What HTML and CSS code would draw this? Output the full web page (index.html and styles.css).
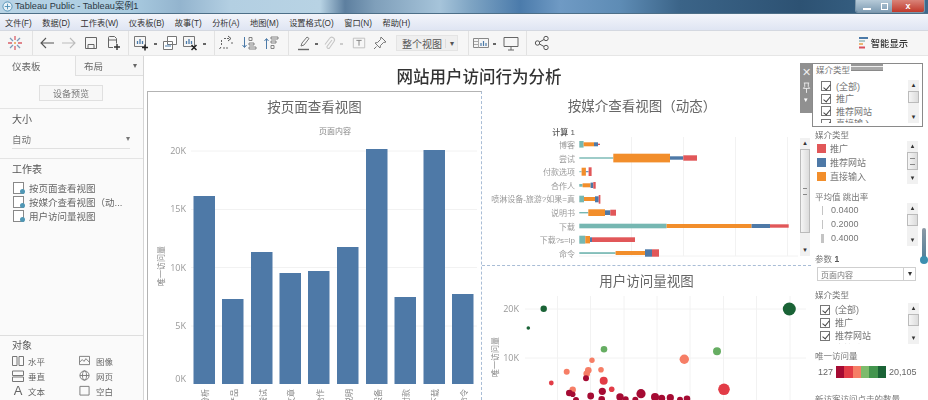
FILE: index.html
```html
<!DOCTYPE html>
<html lang="zh-CN">
<head>
<meta charset="utf-8">
<title>Tableau Public - Tableau案例1</title>
<link rel="stylesheet" href="styles.css">
</head>
<body>
<div class="app">
  <header class="titlebar">
    <svg class="title-logo" viewBox="0 0 12 12"><circle cx="6" cy="6" r="5" fill="#e8f2f8" stroke="#4f8fb5"/><path d="M6 3v6M3 6h6" stroke="#4f8fb5"/></svg>
    <span class="title-text">Tableau Public - Tableau案例1</span>
    <div class="winbtns"><span class="wb wb-min"><i></i></span><span class="wb wb-max"><i></i></span><span class="wb wb-close">x</span></div>
  </header>
  <nav class="menubar">
    <span>文件(F)</span><span>数据(D)</span><span>工作表(W)</span><span>仪表板(B)</span><span>故事(T)</span><span>分析(A)</span><span>地图(M)</span><span>设置格式(O)</span><span>窗口(N)</span><span>帮助(H)</span>
  </nav>
  <div class="toolbar">
    <div class="tg tg1">
      <svg class="ic" viewBox="0 0 16 16"><g stroke="#d9606a" stroke-width="1.3"><path d="M8 1v4M8 11v4M1 8h4M11 8h4"/></g><g stroke="#7d9bb8" stroke-width="1.3"><path d="M3 3l3 3M10 10l3 3M13 3l-3 3M6 10l-3 3"/></g><circle cx="8" cy="8" r="1" fill="#e8a04a"/></svg>
    </div>
    <div class="tg tg2">
      <svg class="ic" viewBox="0 0 16 16"><path d="M15 8H2M7 3L2 8l5 5" fill="none" stroke="#555" stroke-width="1.1"/></svg>
      <svg class="ic" viewBox="0 0 16 16"><path d="M1 8h13M9 3l5 5-5 5" fill="none" stroke="#bbb" stroke-width="1.1"/></svg>
      <svg class="ic" viewBox="0 0 16 16"><path d="M2.500 2.500h11v11h-11zM5 13.500v-4h6v4" fill="none" stroke="#666"/></svg>
      <svg class="ic" viewBox="0 0 16 16"><path d="M8 12.500H3.500v-10a1 1 0 0 1 1-1h5l2 2v5M3.500 5h8" fill="none" stroke="#666"/><path d="M12 9v6M9 12h6" stroke="#333" stroke-width="1.400"/></svg>
    </div>
    <div class="tg tg3">
      <svg class="ic" viewBox="0 0 16 16"><path d="M1.500 1.500h11v10h-11z" fill="none" stroke="#777"/><path d="M4.500 9V6M7 9V4M9.500 9V6" stroke="#4b7aa8" stroke-width="1.300"/><path d="M12 9.500v6M9 12.500h6" stroke="#222" stroke-width="1.500"/></svg>
      <i class="dot"></i>
      <svg class="ic" viewBox="0 0 16 16"><path d="M5.500 1.500h9v8h-9zM1.500 6.500h9v8h-9z" fill="#fff" stroke="#777"/><path d="M4 12V10M6 12V9M8 12v-2" stroke="#4b7aa8"/></svg>
      <svg class="ic" viewBox="0 0 16 16"><path d="M1.500 1.500h11v10h-11z" fill="none" stroke="#777"/><path d="M4.500 9V6M7 9V4M9.500 9V6" stroke="#4b7aa8" stroke-width="1.300"/><path d="M9.500 10l5 5M14.500 10l-5 5" stroke="#222" stroke-width="1.500"/></svg>
      <i class="dot"></i>
    </div>
    <div class="tg tg4">
      <svg class="ic" viewBox="0 0 16 16"><path d="M5 3.500h6M13 7v3M4 13h6M2.500 5v5" fill="none" stroke="#666" stroke-dasharray="2 1"/><path d="M9 1l3 2.500L9 6M2 12l-1.500 2" fill="none" stroke="#555"/></svg>
      <svg class="ic" viewBox="0 0 16 16"><path d="M3.500 2v10M1.500 10l2 2.500 2-2.500" fill="none" stroke="#4b7aa8"/><path d="M8 2.500h3v3H8zM8 8h5v2H8zM8 12h7v2H8z" fill="none" stroke="#777" stroke-width=".9"/></svg>
      <svg class="ic" viewBox="0 0 16 16"><path d="M3.500 14V4M1.500 6l2-2.500 2 2.500" fill="none" stroke="#4b7aa8"/><path d="M8 2h7v2H8zM8 6h5v2H8zM8 10.500h3v3H8z" fill="none" stroke="#777" stroke-width=".9"/></svg>
    </div>
    <div class="tg tg5">
      <svg class="ic" viewBox="0 0 16 16"><path d="M5 11l1-3 5-6 2 1.500-5 6.500z" fill="none" stroke="#777"/><path d="M2 14.500h11" stroke="#666" stroke-width="1.400"/></svg>
      <i class="dot"></i>
      <svg class="ic" viewBox="0 0 16 16"><path d="M11 5l-5 6.500a1.500 1.500 0 0 0 2.500 1.500L13 6.500a2.700 2.700 0 0 0-4.500-3L4 9.500" fill="none" stroke="#c6c6c6" stroke-width="1.100"/></svg>
      <i class="dot dot-pale"></i>
      <svg class="ic ic-t" viewBox="0 0 16 16"><path d="M1.500 2.500h13v11h-13z" fill="none" stroke="#bbb"/><path d="M5 5h6M8 5v6" stroke="#777"/></svg>
      <svg class="ic ic-pin" viewBox="0 0 16 16"><path d="M9 2l5 5-2.500.5-3 3-.5 2.500-5-5 2.500-.5 3-3zM4.500 11.500L2 14" fill="none" stroke="#777"/></svg>
      <div class="combo"><span>整个视图</span><b>▾</b></div>
    </div>
    <div class="tg tg6">
      <svg class="ic" viewBox="0 0 16 16"><path d="M.5 3.500h15v9H.5z" fill="none" stroke="#888"/><path d="M5.500 3.500v9M1 6.500h4M1 9.500h4" stroke="#aaa"/><path d="M8 11V8M10.500 11V6M13 11V8" stroke="#4b7aa8" stroke-width="1.200"/></svg>
      <i class="dot"></i>
      <svg class="ic ic-pres" viewBox="0 0 16 16"><path d="M1 2.500h14v9H1z" fill="none" stroke="#666"/><path d="M8 11.500V15M5 15h6" stroke="#666"/></svg>
    </div>
    <div class="tg tg7">
      <svg class="ic" viewBox="0 0 16 16"><g fill="none" stroke="#555"><circle cx="3.500" cy="8" r="2.200"/><circle cx="12" cy="3.500" r="2.200"/><circle cx="12" cy="12.500" r="2.200"/><path d="M5.500 7l4.500-2.500M5.500 9l4.500 2.500"/></g></svg>
    </div>
    <div class="showme">
      <svg class="showme-ic" viewBox="0 0 10 12"><path d="M0 1h9" stroke="#4b7aa8" stroke-width="2"/><path d="M0 4h6" stroke="#9bb" stroke-width="1.500"/><path d="M0 7h4" stroke="#e8a04a" stroke-width="1.500"/><path d="M0 10.500h6" stroke="#d9505c" stroke-width="2"/></svg>
      <span>智能显示</span>
    </div>
  </div>
  <main class="workspace">
    <aside class="sidebar">
      <div class="tabs"><div class="tab tab-on">仪表板</div><div class="tab tab-off"><span>布局</span><b>▾</b></div></div>
      <section class="sec sec-dev"><button class="devbtn">设备预览</button></section>
      <section class="sec sec-size">
        <h4>大小</h4>
        <div class="sel"><span>自动</span><b>▾</b></div>
      </section>
      <section class="sec sec-sheets">
        <h4>工作表</h4>
        <ul class="sheets">
          <li><i class="sheet-ic"></i>按页面查看视图</li>
          <li><i class="sheet-ic"></i>按媒介查看视图（动...</li>
          <li><i class="sheet-ic"></i>用户访问量视图</li>
        </ul>
      </section>
      <section class="sec-obj">
        <h4>对象</h4>
        <div class="objs">
          <div><svg viewBox="0 0 12 12"><path d="M.5 1.500h4.500v9H.5zM7 1.500h4.500v9H7z" fill="none" stroke="#777"/></svg>水平</div>
          <div class="obj2"><svg viewBox="0 0 12 12"><path d="M.5 1.500h11v9H.5zM.5 8l3-3 2 2 2-3 4 4" fill="none" stroke="#777"/></svg>图像</div>
          <div><svg viewBox="0 0 12 12"><path d="M.5 1h11v4.500H.5zM.5 7h11v4.500H.5z" fill="none" stroke="#777"/></svg>垂直</div>
          <div class="obj2"><svg viewBox="0 0 12 12"><g fill="none" stroke="#777"><circle cx="6" cy="6" r="5"/><ellipse cx="6" cy="6" rx="2.200" ry="5"/><path d="M1 6h10"/></g></svg>网页</div>
          <div><span class="obj-a">A</span>文本</div>
          <div class="obj2"><svg viewBox="0 0 12 12"><path d="M1 1.500h10v9.500H1z" fill="none" stroke="#777"/></svg>空白</div>
        </div>
      </section>
    </aside>
    <div class="dash">
      <div class="dash-main">
        <h1 class="dash-title">网站用户访问行为分析</h1>
        <div class="dash-grid">
          <section class="panel panel-left">
            <h2 class="chart-title">按页面查看视图</h2>
            <svg class="chart" viewBox="149 119 331 281" width="331" height="281">
              <text class="cap" x="336" y="133" text-anchor="middle">页面内容</text>
              <g class="grid"><path d="M192 150H478M192 208.500H478M192 266.500H478M192 325H478"/></g>
              <g class="tick" text-anchor="end"><text x="187" y="153">20K</text><text x="187" y="211">15K</text><text x="187" y="270">10K</text><text x="187" y="328">5K</text><text x="187" y="381">0K</text></g>
              <text class="cap" transform="translate(165 265) rotate(-90)" text-anchor="middle">唯一访问量</text>
              <g class="bar">
                <rect x="194.500" y="195" width="21.500" height="188"/><rect x="223" y="298" width="21.500" height="85"/><rect x="252" y="251" width="21.500" height="132"/><rect x="280.500" y="272" width="21.500" height="111"/><rect x="309" y="270" width="21.500" height="113"/><rect x="338" y="246" width="21.500" height="137"/><rect x="367" y="148" width="21.500" height="235"/><rect x="395.500" y="296" width="21.500" height="87"/><rect x="424.500" y="149" width="21.500" height="234"/><rect x="453" y="293" width="21.500" height="90"/>
              </g>
              <g class="cap" text-anchor="end">
                <text transform="translate(209 388) rotate(-90)">分析</text><text transform="translate(238 388) rotate(-90)">产品</text><text transform="translate(267 388) rotate(-90)">尝试</text><text transform="translate(295 388) rotate(-90)">文章</text><text transform="translate(324 388) rotate(-90)">合作</text><text transform="translate(353 388) rotate(-90)">说明</text><text transform="translate(382 388) rotate(-90)">设备</text><text transform="translate(410 388) rotate(-90)">付款</text><text transform="translate(439 388) rotate(-90)">下载</text><text transform="translate(468 388) rotate(-90)">命令</text>
              </g>
            </svg>
          </section>
          <div class="col-mid">
            <section class="panel panel-media">
              <h2 class="chart-title">按媒介查看视图（动态）</h2>
              <svg class="chart" viewBox="482 118 329 146" width="329" height="146">
                <g class="grid"><path d="M631.500 136V255M683.500 136V255M735.500 136V255M787.500 136V255M579 255H798"/></g>
                <g class="lab" text-anchor="end">
                  <text class="lab-head" x="575" y="134">计算 1</text>
                  <text x="575" y="146.500">博客</text><text x="575" y="160.500">尝试</text><text x="575" y="173.500">付款选项</text><text x="575" y="187.500">合作人</text><text x="575" y="200.500">喷淋设备-旅游?如果=真</text><text x="575" y="214.500">说明书</text><text x="575" y="228.500">下载</text><text x="575" y="241.500">下载?s=lp</text><text x="575" y="255.500">命令</text>
                </g>
                <g class="teal"><rect x="579.300" y="140" width="4.300" height="6.600"/><rect x="579.300" y="156.300" width="34" height="1.400"/><rect x="579.300" y="170.200" width="2.300" height="1"/><rect x="579.300" y="183" width="3.300" height="2.700"/><rect x="579.300" y="194.700" width="4.700" height="6.600"/><rect x="579.300" y="211" width="9" height="1.400"/><rect x="579.300" y="222.700" width="87.300" height="4.600"/><rect x="579.300" y="234.700" width="6" height="8"/><rect x="579.300" y="251.200" width="36.300" height="1.700"/></g>
                <g class="orange"><rect x="583.600" y="141.300" width="10.400" height="4"/><rect x="613.300" y="152.700" width="56.700" height="8.700"/><rect x="581.600" y="166.700" width="4.300" height="8"/><rect x="582.600" y="182.300" width="8" height="4"/><rect x="584" y="196" width="11" height="4"/><rect x="588.300" y="208.300" width="16.700" height="6.700"/><rect x="666.600" y="223" width="85" height="4"/><rect x="585.300" y="235" width="4.700" height="7.400"/><rect x="615.600" y="250" width="29.400" height="4"/></g>
                <g class="blue"><rect x="594" y="141.300" width="4" height="4"/><rect x="670" y="155.300" width="13.300" height="3.400"/><rect x="585.900" y="170.200" width="2.700" height="1"/><rect x="590.600" y="181.600" width="2.700" height="5.400"/><rect x="595" y="195.300" width="3.700" height="6"/><rect x="605" y="209.300" width="5.300" height="4.700"/><rect x="751.600" y="223" width="18.400" height="4"/><rect x="590" y="236.300" width="2" height="4.700"/><rect x="645" y="248.300" width="7" height="7.400"/></g>
                <g class="red"><rect x="598" y="142.700" width="2" height="1.300"/><rect x="683.300" y="154.300" width="13.700" height="5.400"/><rect x="588.600" y="166.300" width="3" height="8.700"/><rect x="593.300" y="181" width="2.400" height="6.700"/><rect x="598.700" y="194" width="1.700" height="8.700"/><rect x="610.300" y="208.700" width="5.700" height="6"/><rect x="770" y="223.300" width="18.700" height="3.400"/><rect x="592" y="236.300" width="43" height="4.700"/><rect x="652" y="248.300" width="7" height="7.400"/></g>
              </svg>
              <div class="vs vs-media"><b>▴</b><i class="thumb thumb-grip"></i><b>▾</b></div>
            </section>
            <section class="panel panel-scatter">
              <h2 class="chart-title">用户访问量视图</h2>
              <svg class="chart" viewBox="482 296 329 104" width="329" height="104">
                <g class="grid"><path d="M525 309H806M525 358H806M557.500 296V400M590.500 296V400M624 296V400M657 296V400M690 296V400M723.500 296V400M756.500 296V400M790 296V400"/></g>
                <g class="tick" text-anchor="end"><text x="519" y="312">20K</text><text x="519" y="361">10K</text></g>
                <text class="cap" transform="translate(498 357) rotate(-90)" text-anchor="middle">唯一访问量</text>
                <g class="c-dg"><circle cx="543.700" cy="308.700" r="3.200"/><circle cx="528.300" cy="328" r="1.800"/><circle cx="789.300" cy="309" r="6.500"/></g>
                <g class="c-lg"><circle cx="604" cy="349.300" r="3.300"/><circle cx="717" cy="351.300" r="4"/></g>
                <g class="c-or"><circle cx="684.300" cy="359.300" r="4.700"/><circle cx="592" cy="360.300" r="2.700"/><circle cx="566.700" cy="371.700" r="3"/><circle cx="588.300" cy="370.300" r="3.300"/><circle cx="586.700" cy="373.700" r="3.300"/><circle cx="601" cy="369.700" r="2.800"/><circle cx="572.700" cy="389.700" r="3.200"/></g>
                <g class="c-rd"><circle cx="551.300" cy="383" r="2.400"/><circle cx="603.700" cy="380.700" r="4"/><circle cx="611.700" cy="389.300" r="2.800"/><circle cx="724" cy="389.300" r="5.800"/></g>
                <g class="c-dr"><circle cx="586" cy="378.300" r="3"/><circle cx="569.300" cy="393" r="3.300"/><circle cx="572.700" cy="394.300" r="2.800"/><circle cx="602.300" cy="391.300" r="3.600"/><circle cx="590.700" cy="396" r="3.400"/><circle cx="641" cy="393.700" r="4.600"/><circle cx="655" cy="397" r="4"/><circle cx="620" cy="397" r="3.700"/><circle cx="661.700" cy="398.300" r="3.500"/><circle cx="670.300" cy="397.700" r="3.600"/><circle cx="687" cy="398.700" r="3.300"/><circle cx="680" cy="399.700" r="3"/><circle cx="601.700" cy="399.300" r="3.300"/><circle cx="625.700" cy="399.300" r="3"/><circle cx="635.300" cy="399.700" r="3"/><circle cx="576" cy="400" r="3"/></g>
              </svg>
            </section>
          </div>
        </div>
      </div>
      <aside class="filters">
        <div class="f-sel">
          <div class="handle"><span>✕</span><svg viewBox="0 0 10 12"><path d="M2 1h6M3 1v4L1.500 7h7L7 5V1M5 7v5" fill="none" stroke="#eee"/></svg><b>▾</b></div>
          <div class="grip"></div>
          <h5>媒介类型</h5>
          <div class="f-body f-body-sel">
            <ul class="checks"><li><i class="chk"></i>(全部)</li><li><i class="chk"></i>推广</li><li><i class="chk"></i>推荐网站</li><li><i class="chk"></i>直接输入</li></ul>
            <div class="vs"><b>▴</b><i class="thumb"></i><b>▾</b></div>
          </div>
        </div>
        <div class="f f-legend">
          <h5>媒介类型</h5>
          <div class="f-body">
            <ul class="swatches"><li><i class="sw sw-r"></i>推广</li><li><i class="sw sw-b"></i>推荐网站</li><li><i class="sw sw-o"></i>直接输入</li><li><i class="sw sw-t"></i>直接访问</li></ul>
            <div class="vs"><b>▴</b><i class="thumb thumb-grip"></i><b>▾</b></div>
          </div>
        </div>
        <div class="f f-rate">
          <h5>平均值 跳出率</h5>
          <div class="f-body">
            <ul class="sizes"><li><i class="sz sz1"></i>0.0400</li><li><i class="sz sz2"></i>0.2000</li><li><i class="sz sz3"></i>0.4000</li></ul>
            <div class="vs"><b>▴</b><i class="thumb"></i><b>▾</b></div>
          </div>
        </div>
        <div class="f f-param">
          <h5>参数 <em>1</em></h5>
          <div class="param-sel"><span>页面内容</span><b>▾</b></div>
        </div>
        <div class="f f-media2">
          <h5>媒介类型</h5>
          <div class="f-body f-body-sel">
            <ul class="checks"><li><i class="chk"></i>(全部)</li><li><i class="chk"></i>推广</li><li><i class="chk"></i>推荐网站</li><li><i class="chk"></i>直接输入</li></ul>
            <div class="vs"><b>▴</b><i class="thumb"></i><b>▾</b></div>
          </div>
        </div>
        <div class="f f-color">
          <h5>唯一访问量</h5>
          <div class="ramp"><span>127</span><div class="ramp-bar"><i></i><i></i><i></i><i></i><i></i><i></i></div><span>20,105</span></div>
          <h5 class="f-last">新访客访问点击的数量</h5>
        </div>
      </aside>
      <div class="slider"></div>
    </div>
  </main>
</div>
</body>
</html>
```

FILE: styles.css
```css
* { box-sizing: border-box; }
html, body { margin: 0; height: 100%; overflow: hidden; background: #fff; }
body { font-family: "Liberation Sans", "Noto Sans CJK SC", sans-serif; color: #555; }
h1, h2, h4, h5, ul { margin: 0; padding: 0; font-weight: normal; list-style: none; }
i, em { font-style: normal; }

.app { width: 928px; height: 400px; display: flex; flex-direction: column; overflow: hidden; filter: blur(.3px); }

/* title bar */
.titlebar { height: 14px; flex: none; display: flex; align-items: center; position: relative; padding-left: 2px;
  background: linear-gradient(90deg, #b9d4e6 0, #a9cbe0 130px, #93b4ce 180px, #b3cfe2 230px, #b8d3e4 320px, #5d7f9f 345px, #7f9fba 375px, #a6c4da 440px, #7fa5c4 470px, #4b7bab 520px, #6f9ac4 560px, #5e8cb5 620px, #3b6488 680px, #2d5273 800px, #3d6a8e 928px);
  border-bottom: 1px solid #4d6f88; }
.title-logo { width: 11px; height: 11px; }
.title-text { margin-left: 2px; font-size: 9.200px; color: #2b3744; line-height: 13px; white-space: nowrap; }
.winbtns { position: absolute; right: 3px; top: 0; display: flex; height: 13px; border: 1px solid #7c96aa; border-top: 0; border-radius: 0 0 3px 3px; overflow: hidden; }
.wb { display: flex; align-items: center; justify-content: center; height: 12px; background: linear-gradient(#b6cad8, #7e9cb3); color: #fff; }
.wb-min { width: 21px; } .wb-min i { width: 8px; height: 2px; margin-top: 5px; background: #fff; }
.wb-max { width: 15px; } .wb-max i { width: 7px; height: 7px; border: 1px solid #fff; }
.wb-close { width: 32px; background: linear-gradient(#d98378, #c0392b); font: bold 9px "Liberation Sans", sans-serif; line-height: 10px; }

/* menu */
.menubar { height: 17px; flex: none; display: flex; align-items: center; gap: 10.500px; padding-left: 5px; font-size: 8.200px; color: #333; white-space: nowrap;
  background: linear-gradient(#f3f5fb, #dfe5f3); border-bottom: 1px solid #d4d8e0; }

/* toolbar */
.toolbar { height: 25px; flex: none; display: flex; align-items: center; background: #f6f6f6; border-bottom: 1px solid #e6e6e6; }
.tg { height: 24px; display: flex; align-items: center; flex: none; border-right: 1px solid #e2e2e2; }
.tg1 { padding: 0 9px 0 7px; width: 33px; }
.tg2 { gap: 6px; padding: 0 7px 0 6px; width: 96px; }
.tg3 { gap: 4px; padding-left: 4px; width: 86px; }
.tg4 { gap: 6px; padding-left: 4px; width: 74px; }
.tg5 { gap: 2px; padding-left: 7px; width: 180px; }
.tg6 { gap: 3px; padding-left: 4px; width: 58px; }
.tg7 { padding-left: 7px; border-right: 0; width: 30px; }
.ic { width: 16px; height: 16px; flex: none; }
.ic-t { margin-left: 6px; width: 14px; }
.ic-pin { margin-left: 4px; }
.ic-pres { margin-left: 3px; }
.dot { width: 5px; height: 5px; flex: none; position: relative; }
.dot::after { content: ""; display: block; width: 3px; height: 2px; margin: 2px auto 0; background: #666; }
.dot-pale::after { background: #ccc; }
.combo { margin-left: 6px; width: 62px; height: 16px; display: flex; align-items: center; justify-content: space-between; background: #efefef; border: 1px solid #e4e4e4; padding: 0 3px 0 5px; font-size: 10px; color: #555; }
.combo b { font-size: 8px; font-weight: normal; border-left: 1px solid #ddd; padding-left: 4px; }
.showme { margin-left: auto; display: flex; align-items: center; gap: 2px; padding-right: 20px; font-size: 9.300px; color: #333; font-weight: 500; }
.showme-ic { width: 10px; height: 12px; }

/* workspace */
.workspace { flex: 1; display: flex; min-height: 0; }
.sidebar { width: 144px; flex: none; background: #fafafa; border-right: 1px solid #d6d6d6; display: flex; flex-direction: column; font-size: 9.500px; color: #666; }
.tabs { height: 20px; display: flex; flex: none; }
.tab { display: flex; align-items: center; }
.tab-on { width: 76px; padding-left: 12px; background: #fafafa; border-right: 1px solid #e0e0e0; }
.tab-off { flex: 1; padding: 0 6px 0 8px; justify-content: space-between; background: #f7f7f7; border-bottom: 1px solid #e0e0e0; }
.tab-off b, .sel b { font-size: 8px; font-weight: normal; }
.sec { border-bottom: 1px solid #e4e4e4; padding-left: 12px; }
.sec-dev { height: 33px; padding: 9px 0 0 39px; }
.devbtn { display: block; width: 64px; height: 16px; padding: 0; background: #f7f7f7; border: 1px solid #e0e0e0; font: 9px "Noto Sans CJK SC", sans-serif; color: #777; }
.sec-size { height: 50px; padding-top: 4px; }
.sec-size h4, .sec-sheets h4, .sec-obj h4 { font-size: 10px; line-height: 14px; color: #555; }
.sel { width: 118px; height: 20px; margin-top: 2px; display: flex; align-items: center; justify-content: space-between; border-bottom: 1px solid #e0e0e0; color: #777; }
.sec-sheets { height: 177px; padding-top: 4px; border-bottom: 1px solid #dedede; }
.sheets { margin-top: 4px; }
.sheets li { height: 14px; display: flex; align-items: center; gap: 4px; padding-left: 1px; white-space: nowrap; }
.sheet-ic { width: 12px; height: 12px; position: relative; flex: none; }
.sheet-ic::before { content: ""; position: absolute; left: 0; top: 0; width: 9px; height: 10px; border: 1px solid #888; background: #fff; }
.sheet-ic::after { content: ""; position: absolute; right: 0; bottom: 0; width: 5px; height: 5px; border-radius: 50%; background: #4f97b5; }
.sec-obj { padding: 3px 0 0 12px; }
.objs { margin-top: 0; display: grid; grid-template-columns: 67px 60px; grid-auto-rows: 15px; font-size: 8.500px; }
.objs > div { display: flex; align-items: center; gap: 4px; white-space: nowrap; }
.objs svg { width: 12px; height: 12px; flex: none; }
.obj2 svg { width: 11px; height: 11px; margin-right: 2px; }
.obj-a { width: 12px; font: 13px/15px "Liberation Sans", sans-serif; color: #666; text-align: center; }

/* dashboard */
.dash { flex: 1; display: flex; position: relative; min-width: 0; }
.dash-main { width: 667px; flex: none; padding-left: 3px; display: flex; flex-direction: column; }
.dash-title { height: 35px; flex: none; text-align: center; font-size: 16.500px; line-height: 42px; font-weight: 500; color: #333; white-space: nowrap; }
.dash-grid { flex: 1; display: flex; min-height: 0; }
.panel { position: relative; overflow: hidden; }
.panel-left { width: 335px; flex: none; border: 1.500px solid #b3b3b3; border-bottom: 0; border-right: 1.500px dashed #a9bdd6; }
.col-mid { flex: 1; display: flex; flex-direction: column; min-width: 0; }
.panel-media { height: 175px; flex: none; border-bottom: 1.500px dashed #a9bdd6; }
.panel-scatter { flex: 1; }
.chart-title { height: 28px; font-size: 13.500px; line-height: 31px; text-align: center; color: #666; white-space: nowrap; }
.panel-media .chart-title { line-height: 31px; padding-right: 9px; }
.panel-scatter .chart-title { height: 30px; line-height: 32px; }
.chart { display: block; }
.grid path { stroke: #f2f2f2; stroke-width: 1; fill: none; }
.tick text { font: 9px "Open Sans", "Liberation Sans", sans-serif; fill: #999; }
.cap text, text.cap { font-size: 8px; fill: #888; }
.bar rect { fill: #4e79a7; }
.lab text { font-size: 8px; fill: #999; }
.lab .lab-head { fill: #555; font-weight: 500; }
.teal rect { fill: #76b7b2; }
.orange rect { fill: #f28e2b; }
.blue rect { fill: #4e79a7; }
.red rect { fill: #e15759; }
.c-dg circle { fill: #1a6336; }
.c-lg circle { fill: #66ad62; }
.c-or circle { fill: #f67e66; }
.c-rd circle { fill: #e23c47; }
.c-dr circle { fill: #a50b33; }

/* scroll bars */
.vs { width: 11px; flex: none; display: flex; flex-direction: column; background: #f1f1f1; }
.vs b { height: 11px; flex: none; font-size: 7px; line-height: 11px; text-align: center; font-weight: normal; color: #333; font-family: "DejaVu Sans", sans-serif; }
.thumb { display: block; height: 12px; flex: none; background: linear-gradient(90deg, #f5f5f5, #dcdcdc); border: 1px solid #bbb; margin-bottom: auto; }
.thumb-grip { height: 18px; position: relative; }
.thumb-grip::after { content: ""; position: absolute; left: 2px; right: 2px; top: 5px; height: 5px; border-top: 1px solid #888; border-bottom: 1px solid #888; }
.vs-media { position: absolute; left: 318px; top: 47px; height: 118px; width: 10px; }
.vs-media .thumb-grip { height: 84px; }
.vs-media .thumb-grip::after { top: 38px; }

/* filters */
.filters { width: 117px; flex: none; padding: 7px 0 0 1px; display: flex; flex-direction: column; font-size: 9px; color: #777; position: relative; overflow: visible; }
.filters > * { flex: none; }
.filters h5 { font-size: 8.500px; line-height: 12px; color: #777; white-space: nowrap; }
.f-sel { position: relative; width: 111px; height: 64px; border: 1.500px solid #8a8a8a; padding: 0 0 0 3px; background: #fff; }
.handle { position: absolute; left: -13px; top: -1.500px; width: 12px; height: 50px; background: #909090; color: #eee; display: flex; flex-direction: column; align-items: center; font-size: 11px; line-height: 13px; gap: 3px; padding-top: 3px; }
.handle svg { width: 9px; height: 11px; }
.handle b { font-size: 7px; line-height: 8px; font-weight: normal; color: #fff; }
.grip { position: absolute; left: 38px; top: 0; width: 32px; height: 7px; background: #a8a8a8; border-top: 2px solid #999; border-bottom: 1px solid #8a8a8a; box-shadow: inset 0 1px 0 #eee; }
.f-body { display: flex; justify-content: space-between; overflow: hidden; height: 43px; }
.f-sel .f-body { margin-top: 4px; padding-right: 3px; height: 43px; }
.f-sel .checks li { height: 12.500px; }
.checks li { height: 13px; display: flex; align-items: center; gap: 5px; padding-left: 5px; white-space: nowrap; font-size: 9px; }
.chk { width: 10px; height: 10px; border: 1px solid #777; background: #fff; position: relative; flex: none; }
.chk::after { content: ""; position: absolute; left: 2.500px; top: .500px; width: 3px; height: 6px; border: solid #444; border-width: 0 1px 1px 0; transform: rotate(40deg); }
.f { padding-left: 3px; }
.f-legend { margin-top: 2px; height: 62px; padding-right: 10px; }
.f-legend .f-body { margin-top: 0; height: 43px; }
.swatches li { height: 14px; display: flex; align-items: center; gap: 4px; padding-left: 2px; white-space: nowrap; }
.sw { width: 9px; height: 9px; flex: none; }
.sw-r { background: #e15759; } .sw-b { background: #4e79a7; } .sw-o { background: #f28e2b; } .sw-t { background: #76b7b2; }
.f-rate { height: 62px; padding-right: 10px; }
.f-rate .f-body { height: 43px; margin-top: 0; }
.sizes li { height: 14px; display: flex; align-items: center; gap: 8px; padding-left: 7px; font: 9px "Liberation Sans", sans-serif; color: #777; }
.sz { background: #c4c4c4; display: block; flex: none; height: 9px; }
.sz1 { width: 1px; } .sz2 { width: 1px; } .sz3 { width: 3px; margin-left: -1px; margin-right: -1px; }
.f-param { height: 36px; }
.f-param em { font-weight: 600; color: #555; }
.param-sel { width: 99px; height: 14px; margin-top: 2px; margin-left: 2px; border: 1px solid #cfcfcf; display: flex; justify-content: space-between; align-items: center; padding-left: 3px; font-size: 8px; }
.param-sel b { width: 12px; height: 100%; border-left: 1px solid #cfcfcf; text-align: center; font-weight: normal; font-size: 8px; line-height: 12px; color: #333; }
.f-media2 { height: 60px; padding-right: 9px; }
.f-media2 .f-body { margin-top: 2px; height: 41px; }
.f-color { margin-top: 1px; }
.ramp { display: flex; align-items: center; gap: 3px; margin-top: 4px; padding-left: 3px; font: 9px "Liberation Sans", sans-serif; color: #666; }
.ramp-bar { width: 50px; height: 12px; display: flex; flex: none; }
.ramp-bar i { flex: 1; }
.ramp-bar i:nth-child(1) { background: #a50b33; }
.ramp-bar i:nth-child(2) { background: #e23c47; }
.ramp-bar i:nth-child(3) { background: #f67e66; }
.ramp-bar i:nth-child(4) { background: #7dbb6c; }
.ramp-bar i:nth-child(5) { background: #43954e; }
.ramp-bar i:nth-child(6) { background: #1a6336; }
.f-last { margin-top: 15px; }

/* zoom slider on the right edge */
.slider { position: absolute; left: 778px; top: 172px; width: 4px; height: 33px; background: linear-gradient(#8d9aa6, #4d7d98); border-radius: 2px; }
.slider::after { content: ""; position: absolute; left: -2px; bottom: -3px; width: 8px; height: 8px; border-radius: 50%; background: #3c8fb0; }
```
